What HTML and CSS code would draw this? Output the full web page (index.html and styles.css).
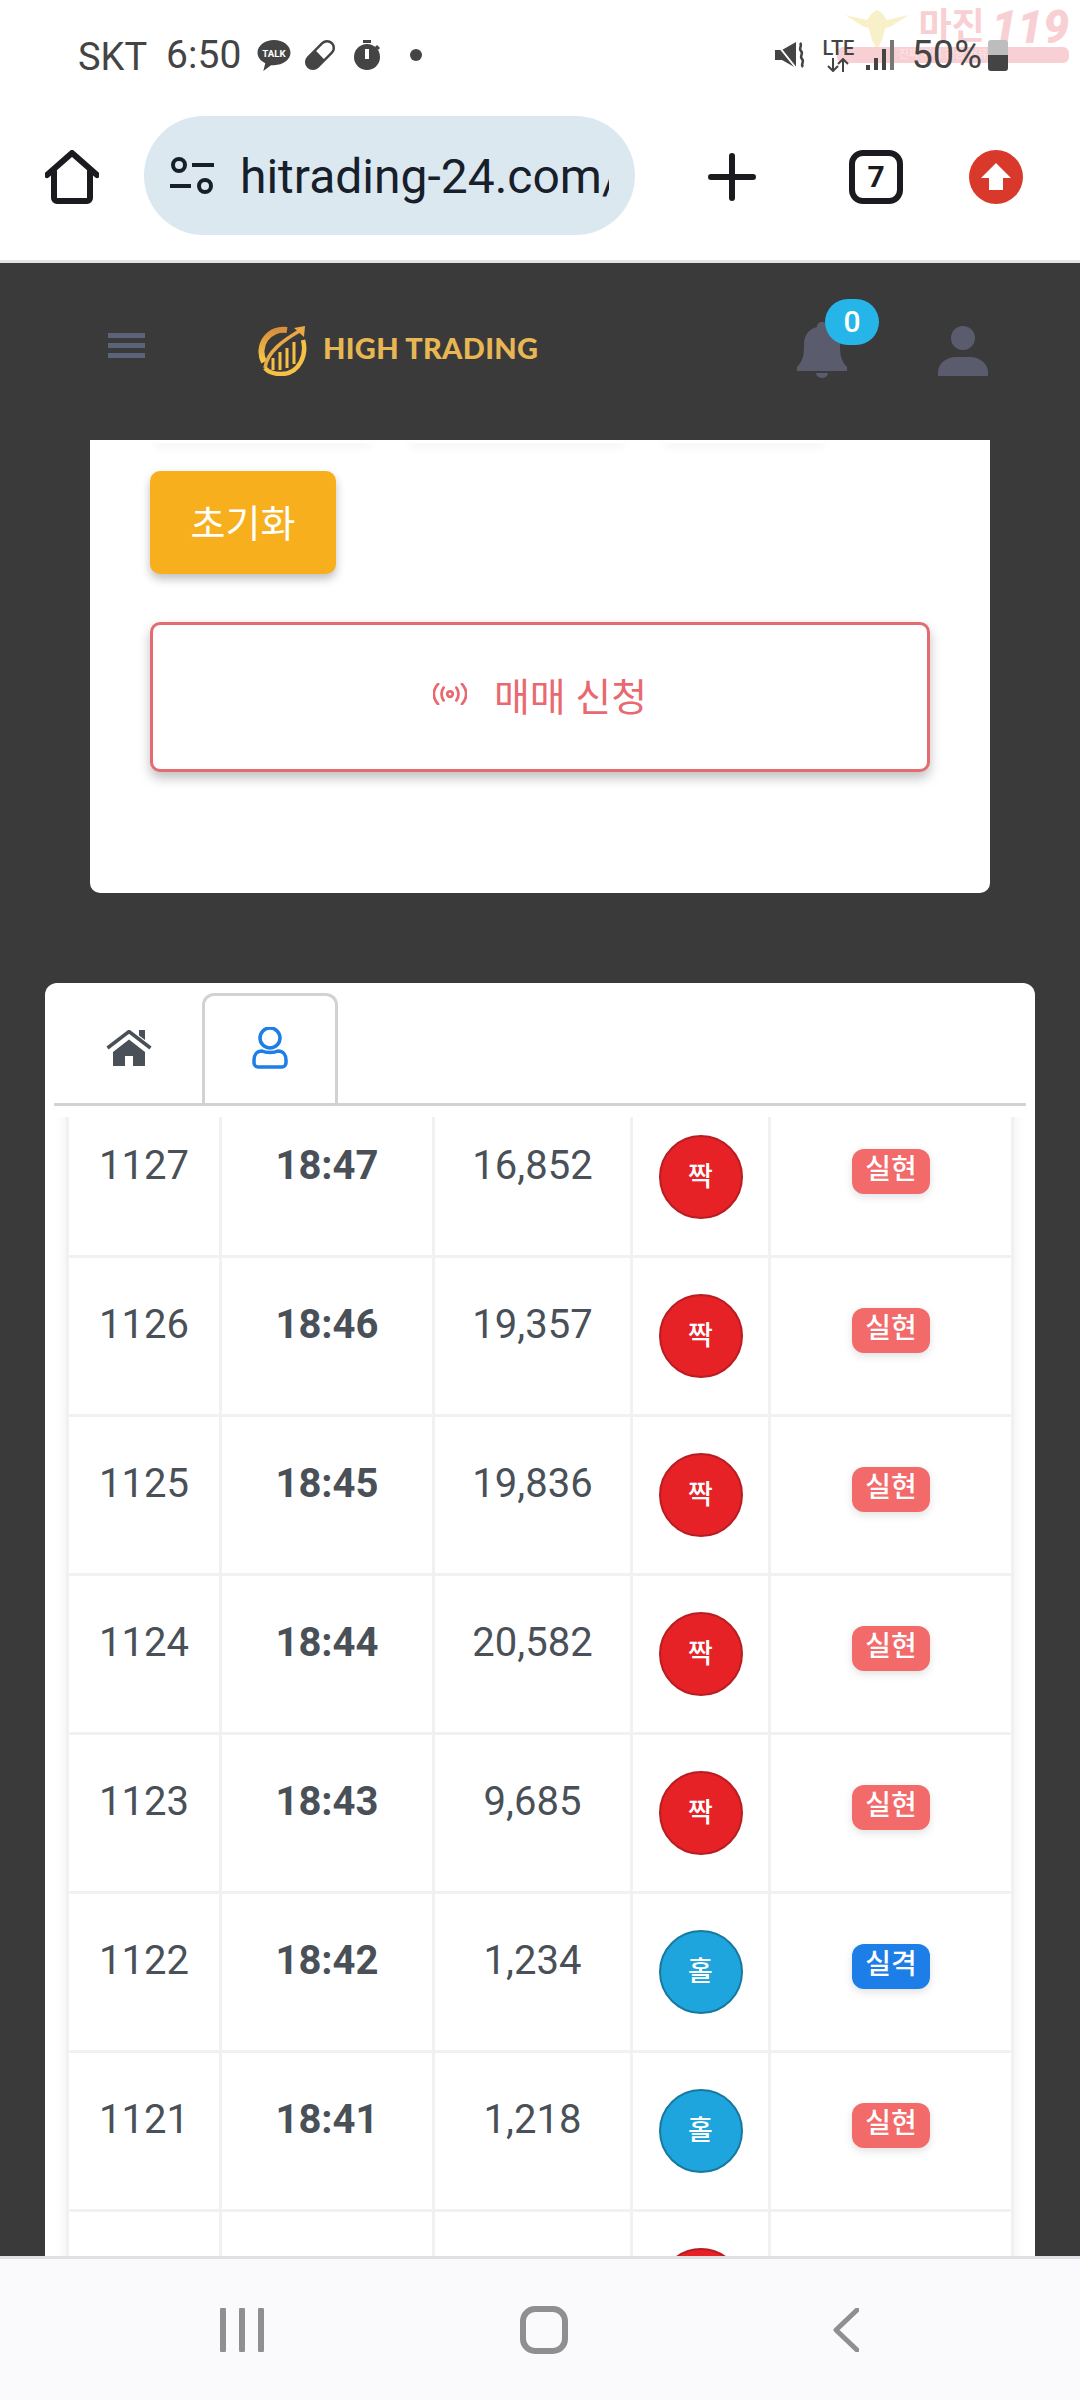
FILE: index.html
```html
<!DOCTYPE html>
<html lang="ko">
<head>
  <meta charset="UTF-8">
  <meta name="viewport" content="width=device-width, initial-scale=1.0">
  <title>High Trading</title>
  <link rel="stylesheet" href="styles.css">
</head>
<body>
  <!-- Android status bar -->
  <div class="status-bar">
    <div class="status-left">
      <span class="carrier">SKT</span>
      <span class="clock">6:50</span>
      <svg class="st-talk" viewBox="0 0 34 34"><path d="M17 1C8 1 0 6.500 0 14c0 5 3.500 9 8 11l-2 8 8-6h3c9 0 17-5.500 17-13S26 1 17 1z" fill="#444"/><text x="17" y="18.500" class="talk-text">TALK</text></svg>
      <svg class="st-pill" viewBox="0 0 32 32"><g transform="rotate(-45 16 16)"><rect x="-2" y="8" width="36" height="16" rx="8" fill="#444"/><path d="M16 10.500h10a5.500 5.500 0 0 1 0 11H16z" fill="#fff"/></g></svg>
      <svg class="st-timer" viewBox="0 0 26 30"><rect x="9" y="0" width="8" height="3" fill="#444"/><circle cx="13" cy="17" r="13" fill="#444"/><rect x="11" y="9" width="4" height="10" fill="#fff"/><path d="M22 6l3 3" stroke="#444" stroke-width="3"/></svg>
      <span class="st-dot"></span>
    </div>
    <div class="status-right">
      <!-- watermark behind the status icons -->
      <div class="watermark">
        <svg class="wm-eagle" viewBox="0 0 76 48"><path d="M0 6l26 6 6-8 6-4 6 4 6 8 26-6-22 14-6 2-4 14-6 12-6-12-4-14-6-2z" fill="#f8f0c8"/></svg>
        <span class="wm-name">마진</span>
        <span class="wm-num">119</span>
        <div class="wm-bar">진짜 먹튀 검증 커뮤니티</div>
      </div>
      <svg class="st-mute" viewBox="0 0 30 30"><path d="M0 10h7L21 2v26L7 20H0z" fill="#444"/><path d="M1 3l20 25" stroke="#fff" stroke-width="2"/><path d="M25 3c3 3-2 5 1 8s-2 5 1 8-2 5 1 8" fill="none" stroke="#444" stroke-width="2.500"/></svg>
      <div class="st-lte">
        <span>LTE</span>
        <svg viewBox="0 0 24 14"><path d="M7 0v13M2 8l5 5 5-5M17 14V1M12 6l5-5 5 5" fill="none" stroke="#444" stroke-width="2"/></svg>
      </div>
      <svg class="st-signal" viewBox="0 0 28 30"><rect x="0" y="25" width="4" height="5" fill="#444"/><rect x="8" y="18" width="4" height="12" fill="#444"/><rect x="16" y="9" width="4" height="21" fill="#444"/><rect x="24" y="0" width="4" height="30" fill="#777"/></svg>
      <span class="st-percent">50%</span>
      <div class="st-battery"></div>
    </div>
  </div>

  <!-- Browser toolbar -->
  <div class="toolbar">
    <svg class="tb-home" viewBox="0 0 54 54"><path d="M2 25L27 3l25 22M9 21v27a3 3 0 0 0 3 3h30a3 3 0 0 0 3-3V21" fill="none" stroke="#1b1b1f" stroke-width="6" stroke-linecap="round" stroke-linejoin="round"/></svg>
    <div class="url-pill">
      <svg class="url-icon" viewBox="0 0 44 38"><circle cx="9" cy="8" r="6" fill="none" stroke="#17202a" stroke-width="4"/><path d="M22 8h22M0 29h21" stroke="#17202a" stroke-width="4"/><circle cx="35" cy="29" r="6" fill="none" stroke="#17202a" stroke-width="4"/></svg>
      <div class="url-text">hitrading-24.com/</div>
    </div>
    <svg class="tb-plus" viewBox="0 0 48 48"><path d="M24 3v42M3 24h42" stroke="#1b1b1f" stroke-width="6" stroke-linecap="round"/></svg>
    <div class="tb-tabs">7</div>
    <svg class="tb-update" viewBox="0 0 54 54"><circle cx="27" cy="27" r="27" fill="#d8392b"/><path d="M27 13L42 28H34V40H20V28H12z" fill="#fff"/></svg>
  </div>

  <!-- Site header -->
  <div class="site-header">
    <div class="burger"><span></span><span></span><span></span></div>
    <div class="brand">
      <svg class="brand-mark" viewBox="0 0 50 50">
        <defs><linearGradient id="gold" x1="0" y1="0" x2="0" y2="1"><stop offset="0" stop-color="#d98f3c"/><stop offset="1" stop-color="#f7c948"/></linearGradient></defs>
        <path d="M30 4A22 22 0 0 0 7 36" fill="none" stroke="url(#gold)" stroke-width="6"/>
        <path d="M8 42C10 26 26 14 46 3" fill="none" stroke="#e9a945" stroke-width="3.500"/>
        <path d="M37 2l11-2-1 11z" fill="#e9a945"/>
        <path d="M46 14c4 14-3 34-22 34-7 0-13-2-16-6" fill="none" stroke="#f5c044" stroke-width="4.500"/>
        <path d="M16 44V32M23 44V26M30 42V22M37 38V16" stroke="#f5c044" stroke-width="3"/>
      </svg>
      <span class="brand-name">HIGH TRADING</span>
    </div>
    <div class="header-icons">
      <div class="bell-wrap">
        <svg class="bell" viewBox="0 0 50 56"><path d="M25 0c3 0 5 2 5 5 9 2 13 9 13 18 0 10 1 16 7 22v4H0v-4c6-6 7-12 7-22 0-9 4-16 13-18 0-3 2-5 5-5z" fill="#5a5c6e"/><path d="M19 51h12a6 5 0 0 1-12 0z" fill="#5a5c6e"/></svg>
        <span class="bell-badge">0</span>
      </div>
      <svg class="user" viewBox="0 0 50 50"><circle cx="25" cy="12" r="12" fill="#5a5c6e"/><path d="M0 50v-4C0 38 8 31 18 31h14c10 0 18 7 18 15v4z" fill="#5a5c6e"/></svg>
    </div>
  </div>

  <div class="content">
    <div class="panel">
      <div class="chips"><span class="chip chip-a"></span><span class="chip chip-b"></span><span class="chip chip-c"></span></div>
      <button class="btn-reset">초기화</button>
      <button class="btn-apply">
        <svg class="apply-icon" viewBox="0 0 36 24"><circle cx="18" cy="12" r="3" fill="none" stroke="#e86a70" stroke-width="3"/><path d="M11 5c-3 4-3 10 0 14M25 5c3 4 3 10 0 14M5 1c-6 7-6 15 0 22M31 1c6 7 6 15 0 22" fill="none" stroke="#e86a70" stroke-width="3" stroke-linecap="round"/></svg>
        <span>매매 신청</span>
      </button>
    </div>

    <div class="history">
      <div class="tabs">
        <div class="tab tab-first">
          <svg class="tab-home" viewBox="0 0 46 36"><path d="M1.500 18L23 1.500 44.500 18" fill="none" stroke="#495057" stroke-width="3.500"/><path d="M33 0h6v10l-6-4.500z" fill="#495057"/><path d="M7 22L23 9.500 39 22v14H27V26h-8v10H7z" fill="#495057"/></svg>
        </div>
        <div class="tab tab-active">
          <svg class="tab-user" viewBox="0 0 36 42"><circle cx="18" cy="11" r="10" fill="none" stroke="#1c7ee6" stroke-width="3.500"/><path d="M10 24c4 2 12 2 16 0 5 0 8 4 8 9v3c0 2-2 4-4 4H6c-2 0-4-2-4-4v-3c0-5 3-9 8-9z" fill="none" stroke="#1c7ee6" stroke-width="3.500"/></svg>
        </div>
      </div>
      <div class="table-scroll">
        <table class="rounds">
          <colgroup><col class="c-no"><col class="c-time"><col class="c-sum"><col class="c-side"><col class="c-res"></colgroup>
          <tbody>
            <tr><td>1127</td><td class="time">18:47</td><td>16,852</td><td class="side"><span class="ball even">짝</span></td><td class="res"><span class="tag win">실현</span></td></tr>
            <tr><td>1126</td><td class="time">18:46</td><td>19,357</td><td class="side"><span class="ball even">짝</span></td><td class="res"><span class="tag win">실현</span></td></tr>
            <tr><td>1125</td><td class="time">18:45</td><td>19,836</td><td class="side"><span class="ball even">짝</span></td><td class="res"><span class="tag win">실현</span></td></tr>
            <tr><td>1124</td><td class="time">18:44</td><td>20,582</td><td class="side"><span class="ball even">짝</span></td><td class="res"><span class="tag win">실현</span></td></tr>
            <tr><td>1123</td><td class="time">18:43</td><td>9,685</td><td class="side"><span class="ball even">짝</span></td><td class="res"><span class="tag win">실현</span></td></tr>
            <tr><td>1122</td><td class="time">18:42</td><td>1,234</td><td class="side"><span class="ball odd">홀</span></td><td class="res"><span class="tag lose">실격</span></td></tr>
            <tr><td>1121</td><td class="time">18:41</td><td>1,218</td><td class="side"><span class="ball odd">홀</span></td><td class="res"><span class="tag win">실현</span></td></tr>
            <tr><td></td><td class="time"></td><td></td><td class="side"><span class="ball even">짝</span></td><td class="res"></td></tr>
          </tbody>
        </table>
      </div>
    </div>
  </div>

  <!-- Android nav bar -->
  <div class="nav-bar">
    <svg class="nav-recent" viewBox="0 0 44 44"><path d="M3 2v40M22 2v40M41 2v40" stroke="#8f8f8f" stroke-width="6" stroke-linecap="round"/></svg>
    <div class="nav-home"></div>
    <svg class="nav-back" viewBox="0 0 26 44"><path d="M24 2L3 22l21 20" fill="none" stroke="#8f8f8f" stroke-width="5" stroke-linecap="round" stroke-linejoin="round"/></svg>
  </div>
</body>
</html>
```

FILE: styles.css
```css
* {
  box-sizing: border-box;
}

html, body {
  height: 100%;
}

body {
  margin: 0;
  width: 1080px;
  height: 2400px;
  overflow: hidden;
  display: flex;
  flex-direction: column;
  background: #3a3a3b;
  font-family: Roboto, "Noto Sans CJK KR", sans-serif;
  color: #495057;
}

svg {
  display: block;
  flex: none;
}

/* Status bar */
.status-bar {
  height: 88px;
  flex: none;
  background: #fff;
  display: flex;
  justify-content: space-between;
  align-items: flex-start;
  padding: 38px 72px 0 78px;
  color: #444;
}

.status-left,
.status-right {
  display: flex;
  align-items: center;
  height: 34px;
}

.carrier {
  font-size: 38px;
  line-height: 34px;
  margin-top: 4px;
}

.clock {
  font-size: 39px;
  line-height: 34px;
  margin-left: 19px;
}

.st-talk {
  width: 34px;
  height: 33px;
  margin-left: 16px;
}

.talk-text {
  font-family: Roboto, sans-serif;
  font-size: 10px;
  font-weight: 700;
  fill: #fff;
  text-anchor: middle;
}

.st-pill {
  width: 32px;
  height: 32px;
  margin-left: 13px;
}

.st-timer {
  width: 26px;
  height: 30px;
  margin-left: 18px;
}

.st-dot {
  width: 12px;
  height: 12px;
  border-radius: 50%;
  background: #444;
  margin-left: 30px;
}

.status-right {
  position: relative;
  z-index: 0;
}

.st-mute {
  width: 30px;
  height: 30px;
}

.st-lte {
  width: 34px;
  margin-left: 16px;
  position: relative;
  font-size: 20px;
  line-height: 18px;
  font-weight: 500;
  text-align: center;
}

.st-lte svg {
  width: 24px;
  height: 14px;
  margin: 1px auto 0;
}

.st-signal {
  width: 28px;
  height: 30px;
  margin-left: 11px;
}

.st-percent {
  font-size: 38px;
  line-height: 34px;
  margin-left: 17px;
}

.st-battery {
  width: 20px;
  height: 31px;
  margin-left: 6px;
  border-radius: 3px;
  background: linear-gradient(#bdbdbd 50%, #444 50%);
}

.watermark {
  position: absolute;
  left: 62px;
  top: -30px;
  z-index: -1;
  width: 232px;
  height: 56px;
}

.wm-eagle {
  position: absolute;
  left: 2px;
  top: 2px;
  width: 76px;
  height: 40px;
}

.wm-name {
  position: absolute;
  left: 81px;
  top: -2px;
  font-size: 36px;
  line-height: 42px;
  font-weight: 700;
  color: #f8d0d3;
}

.wm-num {
  position: absolute;
  left: 154px;
  top: -4px;
  font-size: 46px;
  line-height: 46px;
  font-weight: 900;
  font-style: italic;
  color: #f8d0d3;
}

.wm-bar {
  position: absolute;
  left: 0;
  right: 0;
  top: 39px;
  height: 16px;
  border-radius: 6px;
  background: #f8d0d3;
  color: #fbe6e6;
  font-size: 11px;
  line-height: 16px;
  text-align: center;
}

/* Browser toolbar */
.toolbar {
  height: 175px;
  flex: none;
  background: #fff;
  border-bottom: 3px solid #e3e3e6;
  display: flex;
  align-items: flex-start;
  padding: 28px 57px 0 45px;
}

.tb-home {
  width: 54px;
  height: 54px;
  margin-top: 34px;
}

.url-pill {
  width: 492px;
  height: 119px;
  margin-left: 45px;
  border-radius: 60px;
  background: #dce8f0;
  display: flex;
  align-items: center;
  padding-left: 26px;
}

.url-icon {
  width: 44px;
  height: 38px;
}

.url-text {
  width: 369px;
  margin-left: 26px;
  padding-top: 2px;
  overflow: hidden;
  white-space: nowrap;
  font-size: 48px;
  color: #17202a;
}

.tb-plus {
  width: 48px;
  height: 48px;
  margin: 37px 0 0 73px;
}

.tb-tabs {
  width: 54px;
  height: 54px;
  margin: 34px 0 0 93px;
  border: 6px solid #1b1b1f;
  border-radius: 14px;
  font-size: 30px;
  font-weight: 700;
  line-height: 42px;
  text-align: center;
  color: #1b1b1f;
}

.tb-update {
  width: 54px;
  height: 54px;
  margin: 34px 0 0 66px;
}

/* Site header */
.site-header {
  height: 177px;
  flex: none;
  background: #3a3a3b;
  display: flex;
  align-items: flex-start;
  padding: 0 92px 0 108px;
}

.burger {
  width: 37px;
  margin-top: 70px;
  display: flex;
  flex-direction: column;
  gap: 5px;
}

.burger span {
  height: 5px;
  background: #5b6377;
}

.brand {
  display: flex;
  align-items: flex-start;
  margin: 63px 0 0 112px;
}

.brand-mark {
  width: 50px;
  height: 50px;
}

.brand-name {
  margin-left: 16px;
  font-family: Lato, sans-serif;
  font-size: 29px;
  font-weight: 900;
  line-height: 44px;
  letter-spacing: 0.3px;
  white-space: nowrap;
  color: #e8b754;
}

.header-icons {
  margin-left: auto;
  display: flex;
  align-items: flex-start;
}

.bell-wrap {
  position: relative;
  width: 50px;
  margin-top: 59px;
}

.bell {
  width: 50px;
  height: 56px;
}

.bell-badge {
  position: absolute;
  left: 28px;
  top: -23px;
  width: 54px;
  height: 46px;
  border-radius: 23px;
  background: #25b5e8;
  color: #fff;
  font-size: 30px;
  font-weight: 500;
  line-height: 46px;
  text-align: center;
}

.user {
  width: 50px;
  height: 50px;
  margin: 63px 0 0 91px;
}

/* Scrolled page area */
.content {
  flex: 1;
  min-height: 0;
  overflow: hidden;
  padding: 0 45px;
}

.panel {
  width: 900px;
  height: 453px;
  margin: 0 0 90px 45px;
  background: #fff;
  border-radius: 0 0 10px 10px;
  padding: 0 60px;
  overflow: hidden;
}

.chips {
  display: flex;
  height: 4px;
}

.chip {
  height: 3px;
  box-shadow: 0 3px 8px rgba(0, 0, 0, 0.1);
}

.chip-a {
  width: 215px;
  margin-left: 5px;
}

.chip-b {
  width: 215px;
  margin-left: 40px;
}

.chip-c {
  width: 160px;
  margin-left: 40px;
}

.btn-reset {
  display: block;
  width: 186px;
  height: 103px;
  margin-top: 27px;
  padding: 0 0 5px;
  border: 0;
  border-radius: 10px;
  background: #f7af1e;
  box-shadow: 0 5px 10px rgba(0, 0, 0, 0.25);
  color: #fff;
  font-family: inherit;
  font-size: 38px;
}

.btn-apply {
  width: 780px;
  height: 150px;
  margin-top: 48px;
  padding: 0 0 7px;
  border: 3px solid #e46b70;
  border-radius: 10px;
  background: #fff;
  box-shadow: 0 6px 12px rgba(0, 0, 0, 0.25);
  display: flex;
  align-items: center;
  justify-content: center;
  gap: 27px;
  color: #e86a70;
  font-family: inherit;
  font-size: 39px;
}

.apply-icon {
  width: 34px;
  height: 22px;
}

.history {
  width: 990px;
  background: #fff;
  border-radius: 12px 12px 0 0;
  padding: 10px 9px 0;
}

.tabs {
  height: 113px;
  border-bottom: 3px solid #d2d2d2;
  display: flex;
  padding-left: 17px;
}

.tab {
  width: 131px;
  height: 113px;
  display: flex;
  justify-content: center;
  padding-top: 37px;
}

.tab-first {
  padding-right: 16px;
}

.tab-active {
  width: 136px;
  border: 3px solid #d2d2d2;
  border-bottom: 0;
  border-radius: 12px 12px 0 0;
  padding-top: 31px;
}

.tab-home {
  width: 46px;
  height: 36px;
}

.tab-user {
  width: 36px;
  height: 42px;
}

.table-scroll {
  margin-top: 11px;
  overflow: hidden;
  padding: 0 10px 0 12px;
}

.rounds {
  width: 947px;
  margin-top: -21px;
  border-collapse: collapse;
  table-layout: fixed;
  box-shadow: 0 2px 10px rgba(0, 0, 0, 0.08);
}

.c-no { width: 153px; }
.c-time { width: 213px; }
.c-sum { width: 198px; }
.c-side { width: 138px; }
.c-res { width: 243px; }

.rounds td {
  height: 159px;
  padding: 37px 0 0;
  border: 3px solid #f1f1f2;
  vertical-align: top;
  text-align: center;
  font-size: 40px;
  line-height: 60px;
  color: #495057;
}

.rounds .time {
  font-weight: 700;
}

.rounds .side {
  padding-top: 36px;
}

.rounds .res {
  padding-top: 50px;
}

.ball {
  display: block;
  width: 84px;
  height: 84px;
  margin: 0 auto;
  border-radius: 50%;
  border: 2px solid;
  color: #fff;
  font-size: 27px;
  font-weight: 500;
  line-height: 80px;
}

.even {
  background: #e72226;
  border-color: #b81d22;
}

.odd {
  background: #1ea5dd;
  border-color: #17799f;
}

.tag {
  display: block;
  width: 78px;
  height: 45px;
  margin: 0 auto;
  border-radius: 12px;
  box-shadow: 0 3px 8px rgba(0, 0, 0, 0.12);
  color: #fff;
  font-size: 28px;
  font-weight: 500;
  line-height: 41px;
}

.win {
  background: #f26a6a;
}

.lose {
  background: #1c7ee6;
}

/* Nav bar */
.nav-bar {
  height: 144px;
  flex: none;
  background: #fafafc;
  border-top: 3px solid #e0e0e4;
  display: flex;
  align-items: flex-start;
  padding: 49px 0 0 220px;
}

.nav-recent {
  width: 44px;
  height: 44px;
}

.nav-home {
  width: 48px;
  height: 48px;
  margin: -2px 0 0 256px;
  border: 6px solid #8f8f8f;
  border-radius: 15px;
}

.nav-back {
  width: 26px;
  height: 44px;
  margin-left: 265px;
}
```
